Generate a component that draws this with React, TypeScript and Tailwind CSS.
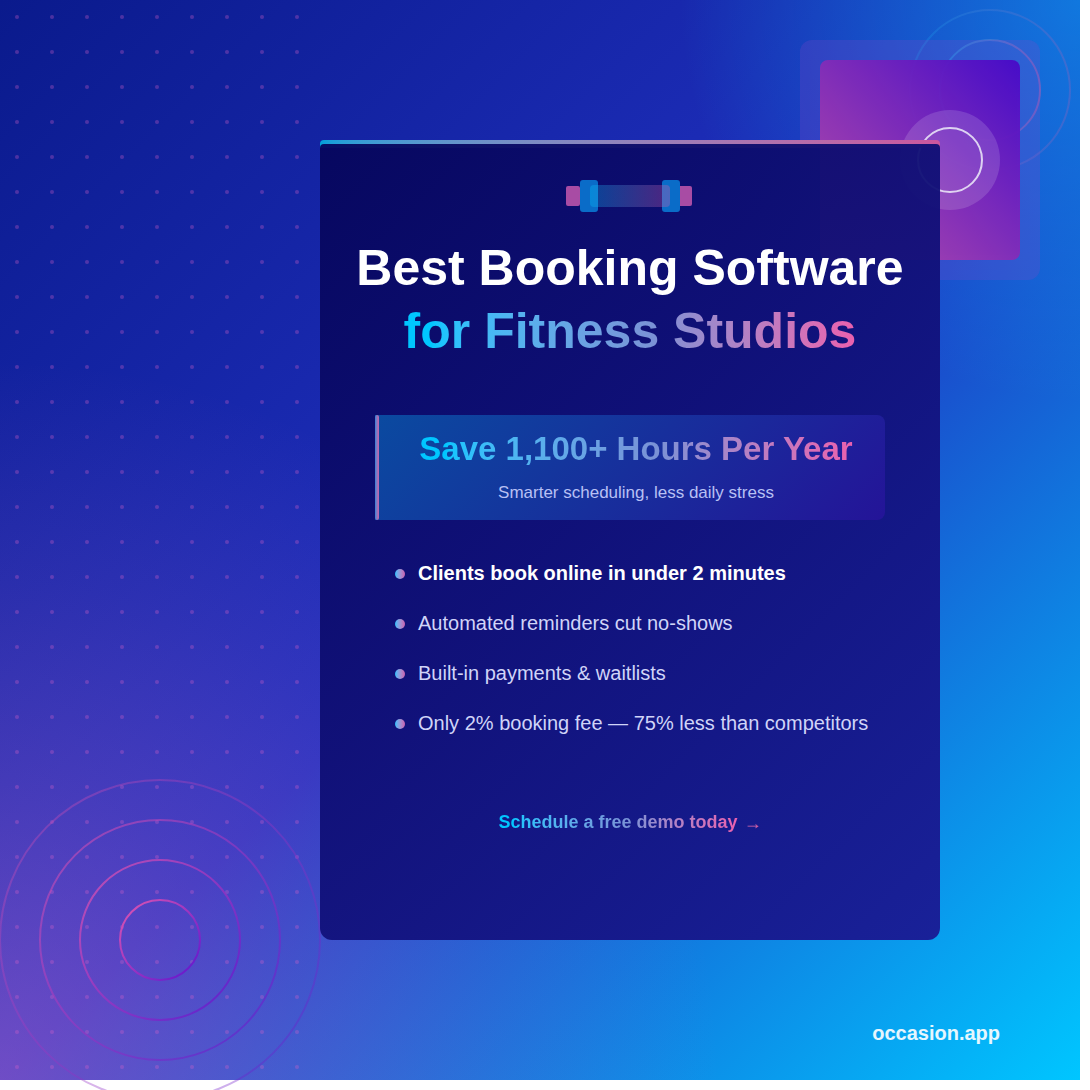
const features = [
  'Automated reminders cut no-shows',
  'Built-in payments & waitlists',
  'Only 2% booking fee — 75% less than competitors',
];

const gradientText = 'inline-block bg-gradient-to-r from-[#00c6ff] from-[6%] via-[#7a92d6] via-[55%] to-[#ea60ae] bg-clip-text text-transparent whitespace-nowrap';

const Bullet = () => (
  <span className="mt-[1px] w-[10px] h-[10px] shrink-0 rounded-full bg-gradient-to-r from-[#10c0ff] to-[#c860b0]" />
);

const Dumbbell = () => (
  <svg width="126" height="32" viewBox="0 0 126 32" className="block">
    <defs>
      <linearGradient id="bar" x1="0" y1="0" x2="1" y2="0">
        <stop offset="0" stopColor="#00c6ff" />
        <stop offset="1" stopColor="#e85aa8" />
      </linearGradient>
    </defs>
    <rect x="0" y="6" width="14" height="20" rx="2" fill="#a84ca4" />
    <rect x="112" y="6" width="14" height="20" rx="2" fill="#a84ca4" />
    <rect x="14" y="0" width="18" height="32" rx="3" fill="#0a6cc8" />
    <rect x="96" y="0" width="18" height="32" rx="3" fill="#0a6cc8" />
    <rect x="24" y="5" width="80" height="22" rx="4" fill="url(#bar)" opacity="0.3" />
  </svg>
);

const Dots = () => (
  <svg width="315" height="1080" className="absolute left-0 top-0">
    <defs>
      <pattern id="dots" width="35" height="35" patternUnits="userSpaceOnUse">
        <circle cx="17" cy="17" r="2" fill="#e060c8" fillOpacity="0.3" />
      </pattern>
    </defs>
    <rect width="315" height="1080" fill="url(#dots)" />
  </svg>
);

const Rings = () => (
  <svg width="324" height="324" viewBox="-2 -2 324 324" className="absolute left-[-2px] top-[778px]">
    <defs>
      <linearGradient id="ring" x1="0" y1="0" x2="1" y2="1">
        <stop offset="0" stopColor="#e858b0" />
        <stop offset="1" stopColor="#5a10d0" />
      </linearGradient>
    </defs>
    <circle cx="160" cy="160" r="160" fill="none" stroke="url(#ring)" strokeWidth="2" opacity="0.35" />
    <circle cx="160" cy="160" r="120" fill="none" stroke="url(#ring)" strokeWidth="2" opacity="0.55" />
    <circle cx="160" cy="160" r="80" fill="none" stroke="url(#ring)" strokeWidth="2" opacity="0.75" />
    <circle cx="160" cy="160" r="40" fill="none" stroke="url(#ring)" strokeWidth="2" opacity="0.95" />
  </svg>
);

const CornerRings = () => (
  <svg width="164" height="164" viewBox="0 0 164 164" className="absolute left-[908px] top-[8px]">
    <defs>
      <linearGradient id="cornerRing" x1="0" y1="0" x2="1" y2="0">
        <stop offset="0" stopColor="#00c6ff" />
        <stop offset="1" stopColor="#e85aa8" />
      </linearGradient>
    </defs>
    <circle cx="82" cy="82" r="80" fill="none" stroke="url(#cornerRing)" strokeWidth="2" opacity="0.2" />
    <circle cx="82" cy="82" r="50" fill="none" stroke="url(#cornerRing)" strokeWidth="2" opacity="0.4" />
  </svg>
);

export default function App() {
  return (
    <div className="w-[1090px] h-[1090px] overflow-hidden bg-white font-['Liberation_Sans',Arial,sans-serif]">
      <div className="relative w-[1080px] h-[1080px] pt-[140px] bg-[radial-gradient(circle_at_0%_100%,rgba(215,115,205,0.43)_0px,rgba(215,115,205,0.22)_300px,rgba(215,115,205,0.1)_500px,rgba(215,115,205,0)_720px),radial-gradient(circle_at_100%_0%,rgba(0,198,255,0.48)_0px,rgba(0,198,255,0)_400px),linear-gradient(135deg,#0a1a8c_0%,#2030c0_50%,#00c6ff_100%)]">
        {/* decor */}
        <Dots />
        <Rings />
        <CornerRings />
        <div className="absolute left-[800px] top-[40px] w-[240px] h-[240px] rounded-xl bg-[rgba(140,70,200,0.22)] p-5">
          <div className="w-[200px] h-[200px] rounded-lg opacity-95 bg-[linear-gradient(45deg,#c050a8_0%,#4808c8_100%)] flex items-center justify-end pr-5">
            <div className="w-[100px] h-[100px] rounded-full bg-white/15 flex items-center justify-center">
              <div className="w-[66px] h-[66px] rounded-full border-2 border-white/80" />
            </div>
          </div>
        </div>

        {/* card */}
        <div className="relative ml-[320px] w-[620px] h-[800px] flex flex-col">
          <div className="h-2 -mb-1 shrink-0 rounded-t-[4px] bg-gradient-to-r from-[#00a0d8] to-[#cc569e]" />
          <div className="relative flex-1 rounded-t-[4px] rounded-b-xl bg-[linear-gradient(135deg,rgba(6,6,92,0.95),rgba(26,26,148,0.95))] flex flex-col items-center">
            <div className="mt-9 self-start ml-[246px]">
              <Dumbbell />
            </div>
            <h1 className="mt-[25px] text-[50px] leading-[62px] font-bold text-white whitespace-nowrap">Best Booking Software</h1>
            <h2 className={`mt-[1px] text-[50px] leading-[62px] font-bold ${gradientText}`}>for Fitness Studios</h2>

            <div className="mt-[53px] w-[510px] h-[105px] shrink-0 flex rounded-r-lg self-start ml-[55px] bg-[linear-gradient(135deg,#0a4aa0,#241498)]">
              <div className="w-1 shrink-0 rounded-[2px] bg-gradient-to-r from-[#2080d8] to-[#c860a8]" />
              <div className="flex-1 pl-2 flex flex-col items-center">
                <div className={`mt-[14px] text-[33px] leading-[40px] font-bold ${gradientText}`}>Save 1,100+ Hours Per Year</div>
                <div className="mt-[14px] text-[17px] leading-[20px] text-[#b8c0f4] whitespace-nowrap">Smarter scheduling, less daily stress</div>
              </div>
            </div>

            <ul className="mt-[28px] self-start ml-[75px] flex flex-col">
              <li className="h-[50px] flex items-center gap-[13px] text-[20px] font-bold text-white whitespace-nowrap">
                <Bullet />
                Clients book online in under 2 minutes
              </li>
              {features.map((text) => (
                <li key={text} className="h-[50px] flex items-center gap-[13px] text-[20px] text-[#d0d4f8] whitespace-nowrap">
                  <Bullet />
                  {text}
                </li>
              ))}
            </ul>

            <div className="mt-[60px] flex items-center gap-[6px] text-[18px] font-bold">
              <span className={`leading-[24px] ${gradientText}`}>Schedule a free demo today</span>
              <span className="text-[#cc62a8] leading-[24px] font-normal mt-[3px]">→</span>
            </div>
          </div>
        </div>

        {/* footer */}
        <div className="relative mt-[81px] pr-[80px] text-right text-[20px] leading-[24px] font-bold text-white/90">occasion.app</div>
      </div>
    </div>
  );
}
